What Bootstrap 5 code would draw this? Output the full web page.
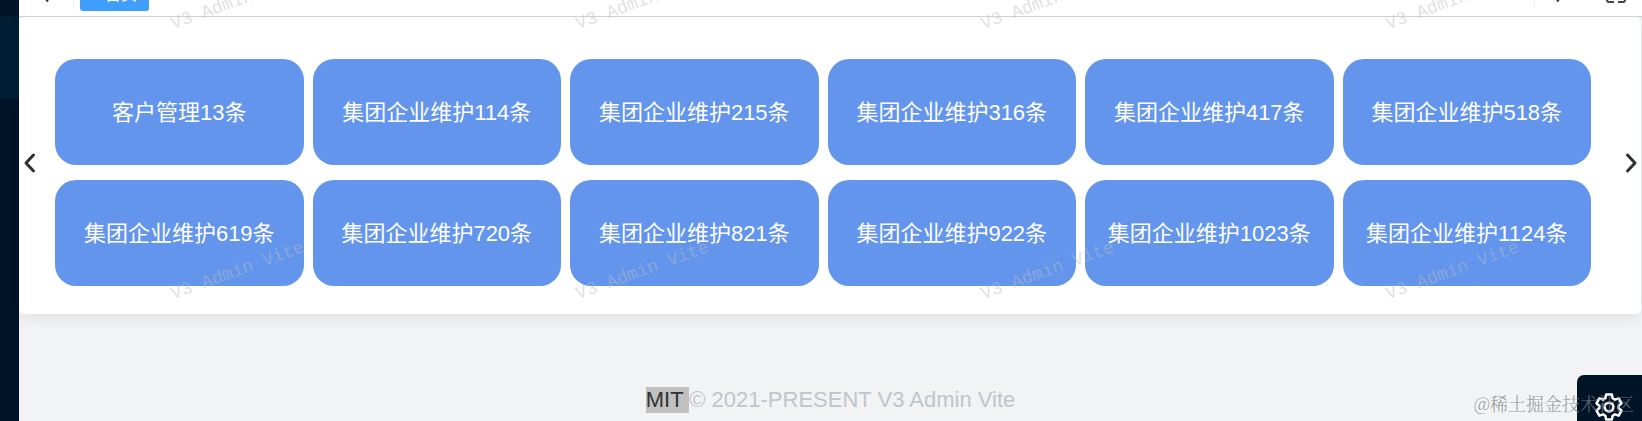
<!DOCTYPE html>
<html lang="zh-CN">
<head>
<meta charset="utf-8">
<meta name="viewport" content="width=device-width, initial-scale=1">
<title>V3 Admin Vite</title>
<link rel="stylesheet" href="https://cdn.jsdelivr.net/npm/bootstrap@5.3.0/dist/css/bootstrap.min.css">
<style>
  body { font-family: "Liberation Sans", "Noto Sans CJK SC", sans-serif; background: #f2f3f5; font-size: 22px; line-height: 26px; }
  .side-menu { width: 19px; background: #001428; }
  .side-logo { height: 16px; background: #001428; }
  .side-active { height: 82px; background: #001f35; }
  .tags-bar { height: 17px; background: #fff; border-bottom: 1px solid #cfd1d4; z-index: 1; }
  .tags-bar button { border: 0; background: none; padding: 0; }
  .tag-scroll { width: 55px; height: 8px; }
  .tags-bar .tag-item { width: 69px; height: 11px; margin-left: 6px; padding: 0 0 6px 13px; background: #409eff; color: #fff; border-radius: 0 0 3px 3px; font-size: 16px; line-height: 20px; overflow: hidden; }
  .panel { background: #fff; border-radius: 5px; margin-right: 1px; padding: 42px 50px 28px 36px; box-shadow: 0 0 20px rgba(0,0,0,.12); }
  .tiles { display: grid; grid-template-columns: repeat(6, 1fr); gap: 15px 9px; }
  .tile { height: 106px; border: 0; border-radius: 21px; background: #6495ed; color: #fff; padding: 2px 0 0; white-space: nowrap; }
  .arrow { top: 49%; width: 20px; height: 24px; border: 0; background: none; padding: 0; transform: translateY(-50%); }
  .foot { color: #c0c4cc; padding-top: 73px; }
  .foot mark { background: #c0c0c0; color: #303133; padding: 0; white-space: pre; display: inline-block; }
  .marks { inset: 0; overflow: hidden; pointer-events: none; z-index: 5; display: grid; grid-template-columns: repeat(4, 405px); grid-auto-rows: 270px; padding: 14px 0 0 175px; }
  .marks span { font: 18px/20px "Liberation Mono", monospace; color: rgba(185,188,192,.46); transform: rotate(-20deg); transform-origin: 0 100%; height: 20px; white-space: nowrap; }
  .gear { right: 0; bottom: 0; width: 65px; height: 46px; background: #001428; border: 0; border-radius: 7px 0 0 0; padding: 17px 2px 0 0; overflow: hidden; z-index: 3; }
  .credit { right: 8px; bottom: 6px; font: 18px/24px "Noto Serif CJK SC", "Liberation Serif", "Noto Sans CJK SC", serif; color: rgba(125,128,132,.8); font-weight: 300; z-index: 6; }
</style>
</head>
<body>
<div class="d-flex min-vh-100 position-relative overflow-hidden">
  <aside class="side-menu flex-shrink-0">
    <div class="side-logo"></div>
    <div class="side-active"></div>
  </aside>
  <div class="flex-grow-1 position-relative">
    <nav class="tags-bar d-flex justify-content-between align-items-start position-relative" aria-label="标签">
      <div class="d-flex align-items-start">
        <button class="tag-scroll" type="button" aria-label="向左"><svg class="d-block" width="55" height="8"><path d="M26 -2l3 3.500" stroke="#333" stroke-width="2" fill="none"/><path d="M54.500 0v8" stroke="#eee"/></svg></button>
        <button class="tag-item d-flex align-items-end justify-content-center" type="button">首页</button>
      </div>
      <div class="d-flex align-items-start">
        <button type="button" aria-label="向右"><svg class="d-block" width="68" height="8"><path d="M.5 0v8" stroke="#eee"/><path d="M27 -3l-4 4.500" stroke="#333" stroke-width="2" fill="none"/></svg></button>
        <button type="button" aria-label="全屏"><svg class="d-block" width="40" height="8" fill="none" stroke="#444" stroke-width="2"><path d="M5 -3v3q0 2 2 2h5M16 2h5q2 0 2-2v-3"/></svg></button>
      </div>
    </nav>
    <main>
      <section class="panel position-relative">
        <div class="tiles" id="tiles"></div>
        <button class="arrow position-absolute start-0" type="button" aria-label="上一页"><svg class="d-block" width="20" height="24" fill="none" stroke="#303133" stroke-width="3" stroke-linecap="round" stroke-linejoin="round"><path d="M14.500 4L7 12l7.500 8"/></svg></button>
        <button class="arrow position-absolute end-0" type="button" aria-label="下一页"><svg class="d-block" width="20" height="24" fill="none" stroke="#303133" stroke-width="3" stroke-linecap="round" stroke-linejoin="round"><path d="M6.500 4L14 12l-7.500 8"/></svg></button>
      </section>
    </main>
    <footer class="foot text-center"><mark>MIT </mark>© 2021-PRESENT V3 Admin Vite</footer>
  </div>
  <div class="marks position-absolute" id="marks" aria-hidden="true"></div>
  <button class="gear position-absolute" type="button" aria-label="设置">
    <svg class="d-block mx-auto" width="30" height="30" viewBox="0 0 24 24" fill="none" stroke="#fff" stroke-width="2" stroke-linejoin="round"><path d="M9.700 2h4.600l.6 3 1.900 1.100 2.900-1 2.300 4-2.300 2v1.800l2.300 2-2.300 4-2.900-1-1.900 1.100-.6 3H9.700l-.6-3-1.900-1.100-2.900 1-2.300-4 2.300-2v-1.800l-2.300-2 2.300-4 2.900 1L9.100 5z"/><circle cx="12" cy="12" r="3.500"/></svg>
  </button>
  <div class="credit position-absolute">@稀土掘金技术社区</div>
</div>
<script src="https://cdn.jsdelivr.net/npm/bootstrap@5.3.0/dist/js/bootstrap.bundle.min.js"></script>
<script>
  const names = ['客户管理13条'];
  for (let i = 1; i < 12; i++) names.push('集团企业维护' + i + (13 + i) + '条');
  document.getElementById('tiles').innerHTML = names.map(n => `<button class="tile" type="button">${n}</button>`).join('');
  document.getElementById('marks').innerHTML = '<span>V3 Admin Vite</span>'.repeat(8);
</script>
</body>
</html>
